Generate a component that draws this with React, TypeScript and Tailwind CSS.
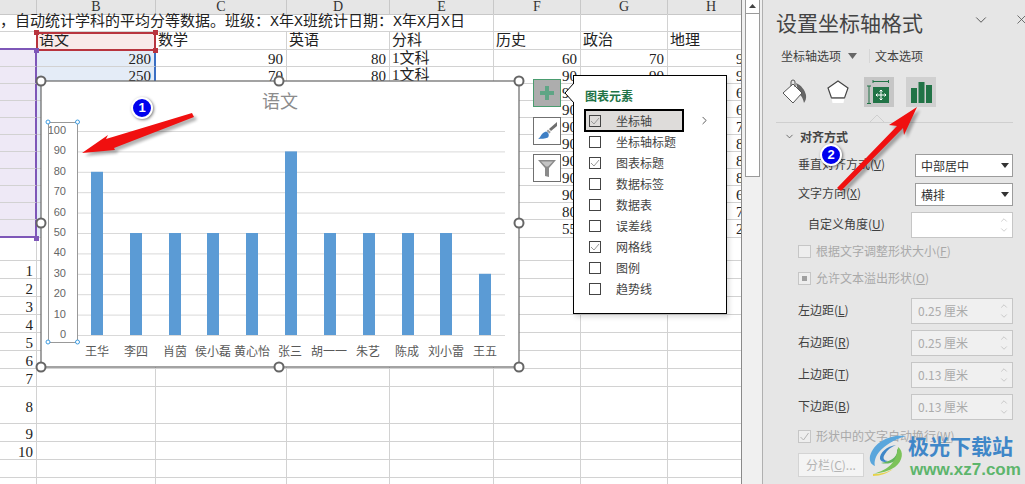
import { ChevronDown, ChevronRight, ChevronUp, X } from "lucide-react";

const rowHeights = [18, 18, 17, 17, 17, 17, 17, 17, 17, 17, 17, 17, 18, 23, 18, 18, 18, 18, 18, 18, 18, 37, 18, 18, 18, 18];
const colClass = "grid grid-cols-[37px_119px_131px_103px_104px_87px_87px_87px]";
const cell = "border-r border-b border-[#d2d2d2] pl-[2px] pr-[3px] flex items-center whitespace-nowrap overflow-hidden";

// row index -> [B, C, D, E, F, G, H]
const data: Record<number, string[]> = {
  1: ["语文", "数学", "英语", "分科", "历史", "政治", "地理"],
  2: ["280", "90", "80", "1文科", "60", "70", "90"],
  3: ["250", "70", "80", "1文科", "90", "90", "90"],
  4: ["", "", "", "", "90", "", "60"],
  5: ["", "", "", "", "90", "", "60"],
  6: ["", "", "", "", "90", "", "70"],
  7: ["", "", "", "", "90", "", "80"],
  8: ["", "", "", "", "90", "", "80"],
  9: ["", "", "", "", "90", "", "80"],
  10: ["", "", "", "", "90", "", "60"],
  11: ["", "", "", "", "80", "", "70"],
  12: ["", "", "", "", "55", "", "20"],
};

const rowNumbers: Record<number, string> = { 14: "1", 15: "2", 16: "3", 17: "4", 18: "5", 19: "6", 20: "7", 21: "8", 22: "9", 23: "10" };

const bars = [
  { name: "王华", x: 91, v: 80, c: 97 },
  { name: "李四", x: 130, v: 50, c: 136 },
  { name: "肖茵", x: 169, v: 50, c: 175 },
  { name: "侯小磊", x: 207, v: 50, c: 213 },
  { name: "黄心怡", x: 246, v: 50, c: 252 },
  { name: "张三", x: 285, v: 90, c: 290 },
  { name: "胡一一", x: 324, v: 50, c: 329 },
  { name: "朱艺", x: 363, v: 50, c: 368 },
  { name: "陈成", x: 402, v: 50, c: 407 },
  { name: "刘小雷", x: 440, v: 50, c: 446 },
  { name: "王五", x: 479, v: 30, c: 485 },
];

const menuItems = [
  { label: "坐标轴", on: true, active: true },
  { label: "坐标轴标题", on: false },
  { label: "图表标题", on: true },
  { label: "数据标签", on: false },
  { label: "数据表", on: false },
  { label: "误差线", on: false },
  { label: "网格线", on: true },
  { label: "图例", on: false },
  { label: "趋势线", on: false },
];

function Sheet() {
  return (
    <div className="w-[742px] shrink-0 overflow-hidden border-r border-[#8a8a8a] font-['Liberation_Serif','Noto_Sans_CJK_SC',serif] text-[15px] leading-[15px] text-[#222]">
      <div className={`${colClass} h-[14px] bg-[#e6e6e6] text-[14px] leading-[14px] text-[#333]`}>
        {["", "B", "C", "D", "E", "F", "G", "H"].map((c, i) => (
          <div key={i} className="text-center border-r border-[#c8c8c8] border-b">{c}</div>
        ))}
      </div>
      {rowHeights.map((h, r) => {
        if (r === 0) {
          return (
            <div key={r} className={colClass} style={{ height: h }}>
              <div className={`${cell} col-span-5 !pl-0 !overflow-visible font-['Liberation_Mono','Noto_Sans_CJK_SC',monospace]`}>，自动统计学科的平均分等数据。班级：X年X班统计日期：X年X月X日</div>
              <div className={cell}></div>
              <div className={cell}></div>
              <div className={cell}></div>
            </div>
          );
        }
        const values = data[r] || ["", "", "", "", "", "", ""];
        const inPurple = r >= 2 && r <= 12;
        return (
          <div key={r} className={colClass} style={{ height: h }}>
            <div
              className={`${cell} justify-end pt-[4px] ${inPurple ? "bg-[#eee9f6] !border-r-2 !border-r-[#7e57b8]" : ""} ${r === 1 || r === 12 ? "!border-b-2 !border-b-[#7e57b8]" : ""}`}
            >
              {rowNumbers[r]}
            </div>
            {values.map((v, i) => (
              <div
                key={i}
                className={`${cell} ${r > 1 && i !== 3 ? "justify-end pt-[2px]" : ""} ${i === 0 && r === 1 ? "bg-[#f8e9e9]" : ""} ${i === 0 && inPurple ? "bg-[#e4ecf7] !border-r-2 !border-r-[#3a6fc4]" : ""}`}
              >
                {v}
              </div>
            ))}
          </div>
        );
      })}
    </div>
  );
}

function Selection() {
  return (
    <>
      <div className="absolute left-[36px] top-[32px] w-[120px] h-[19px] border-2 border-[#b8343e]" />
      <div className="absolute left-[34px] top-[30px] w-[5px] h-[5px] bg-[#b8343e]" />
      <div className="absolute left-[153px] top-[30px] w-[5px] h-[5px] bg-[#b8343e]" />
      <div className="absolute left-[153px] top-[48px] w-[5px] h-[5px] bg-[#b8343e]" />
      <div className="absolute left-[34px] top-[48px] w-[5px] h-[5px] bg-[#7e57b8]" />
      <div className="absolute left-[34px] top-[236px] w-[5px] h-[5px] bg-[#7e57b8]" />
    </>
  );
}

function Chart() {
  const handles = [
    [41, 81], [279, 81], [519, 81], [41, 223], [519, 223], [41, 367], [279, 367], [519, 367],
  ];
  const ticks = [100, 90, 80, 70, 60, 50, 40, 30, 20, 10, 0];
  return (
    <div className="absolute left-[41px] top-[81px] w-[478px] h-[286px] bg-white">
      <svg width="478" height="286" viewBox="41 81 478 286" className="overflow-visible font-['Noto_Sans_CJK_SC',sans-serif]">
        <rect x="41" y="81" width="478" height="286" fill="white" stroke="#666" strokeWidth="1.2" />
        <text x="280" y="108" textAnchor="middle" fontSize="18" fill="#8c8c8c">语文</text>
        {ticks.map((t) => {
          const y = 335 - t * 2.04;
          return (
            <g key={t}>
              <line x1="78" x2="505" y1={y + 0.5} y2={y + 0.5} stroke="#d9d9d9" />
              <text x="66" y={y + 3} textAnchor="end" fontSize="11" fill="#666" fontFamily="Liberation Sans">{t}</text>
            </g>
          );
        })}
        {bars.map((b) => (
          <g key={b.name}>
            <rect x={b.x} y={335 - b.v * 2.04} width="12" height={b.v * 2.04} fill="#5b9bd5" />
            <text x={b.c} y="356" textAnchor="middle" fontSize="12" fill="#595959">{b.name}</text>
          </g>
        ))}
        <rect x="48.5" y="122.5" width="29" height="220" fill="none" stroke="#999" />
        {[[48, 122], [77.5, 122], [48, 342], [77.5, 342]].map(([x, y], i) => (
          <circle key={i} cx={x} cy={y} r="2" fill="white" stroke="#3d9be0" />
        ))}
        {handles.map(([x, y], i) => (
          <circle key={i} cx={x} cy={y} r="4.5" fill="white" stroke="#666" strokeWidth="2" />
        ))}
      </svg>
    </div>
  );
}

function CheckMark({ on }: { on: boolean }) {
  return (
    <span className="w-[12px] h-[12px] border border-[#444] flex items-center justify-center bg-transparent shrink-0">
      {on && (
        <svg width="10" height="10" viewBox="0 0 10 10">
          <path d="M1 5l3 3 5-6" fill="none" stroke="#999" strokeWidth="1" />
        </svg>
      )}
    </span>
  );
}

function ChartTools() {
  return (
    <div className="absolute left-[533px] top-[79px] flex flex-col gap-[10px]">
      <div className="w-[28px] h-[28px] bg-[#adadad] border border-[#4a9c6f] flex items-center justify-center">
        <svg width="16" height="16" viewBox="0 0 16 16">
          <path d="M6 1h4v5h5v4h-5v5H6v-5H1V6h5z" fill="#5fa585" />
        </svg>
      </div>
      <div className="w-[28px] h-[28px] bg-white border border-[#707070] flex items-center justify-center">
        <svg width="24" height="24" viewBox="0 0 24 24">
          <path d="M22 3l-8 7 2 2 6-5z" fill="#6e6e6e" />
          <path d="M13 10.5l2.8 2.6-1.4 1.4-2.8-2.4z" fill="#9a9a9a" />
          <path d="M11 12.5c3 1 3.5 4 2 6-3 1.5-7 1-10 1.5 3-2 3-6 8-7.500z" fill="#3f7fc4" />
        </svg>
      </div>
      <div className="w-[28px] h-[28px] mt-[-1px] bg-white border border-[#707070] flex items-center justify-center">
        <svg width="22" height="22" viewBox="0 0 22 22">
          <path d="M2 3h18l-7 8v9l-4-1v-8z" fill="#8a8a8a" />
          <path d="M5 4.500h12l-5 5h-2z" fill="#c4c4c4" />
        </svg>
      </div>
    </div>
  );
}

function ElementsMenu() {
  return (
    <div className="absolute left-[573px] top-[75px] w-[154px] h-[239px] bg-white border border-black shadow-[2px_3px_5px_rgba(0,0,0,0.15)] pt-[10px] pl-[11px] font-['Noto_Sans_CJK_SC',sans-serif] text-[12px] text-[#444]">
      <svg width="10" height="20" viewBox="0 0 10 20" className="absolute left-[-10px] top-[7px]">
        <path d="M10 0L1 10l9 10" fill="white" stroke="black" />
      </svg>
      <div className="h-[20px] leading-[20px] font-bold text-[#217346]">图表元素</div>
      <div className="mt-[4px]">
        {menuItems.map((m) => (
          <div
            key={m.label}
            className={`relative h-[21px] w-[98px] flex items-center pl-[4px] ${m.active ? "bg-[#dedcda] outline-2 outline-black -outline-offset-1" : ""}`}
          >
            <CheckMark on={m.on} />
            <span className="ml-[15px] whitespace-nowrap">{m.label}</span>
            {m.active && <ChevronRight size={13} strokeWidth={1.6} className="absolute left-[113px] top-[4px] text-[#444]" />}
          </div>
        ))}
      </div>
    </div>
  );
}

function Scrollbar() {
  return (
    <div className="w-[20px] shrink-0 bg-[#f0f0f0] pl-[3px] flex flex-col">
      <div className="w-[15px] h-[14px] bg-white border-l border-r border-[#9a9a9a] border-b flex items-center justify-center">
        <svg width="7" height="5" viewBox="0 0 7 5"><path d="M3.500 0L7 4H0z" fill="#444" /></svg>
      </div>
      <div className="w-[15px] h-[163px] bg-white border border-t-0 border-[#9a9a9a]" />
    </div>
  );
}

function FieldLabel({ text, hot }: { text: string; hot: string }) {
  return (
    <span className="whitespace-nowrap -mt-[3px]">
      {text}(<span className="underline">{hot}</span>)
    </span>
  );
}

function SelectBox({ value }: { value: string }) {
  return (
    <div className="w-[98px] h-[23px] bg-white border border-[#9c9c9c] flex items-center justify-between pl-[5px] pr-[3px] text-[#333]">
      <span>{value}</span>
      <svg width="8" height="5" viewBox="0 0 8 5"><path d="M0 0h8L4 5z" fill="#333" /></svg>
    </div>
  );
}

function Spinner({ value, disabled }: { value?: string; disabled?: boolean }) {
  return (
    <div className={`w-[102px] h-[26px] border border-[#c6c6c6] flex items-center justify-between pl-[6px] pr-[3px] ${disabled ? "bg-[#f0f0f0] text-[#ababab]" : "bg-white"}`}>
      <span>{value}</span>
      <span className="flex flex-col text-[#a0a0a0]">
        <ChevronUp size={10} strokeWidth={1.2} />
        <ChevronDown size={10} strokeWidth={1.2} />
      </span>
    </div>
  );
}

function DisabledCheck({ children, mark }: { children: React.ReactNode; mark?: "square" | "tick" }) {
  return (
    <div className="flex items-center gap-[5px] pl-[35px] text-[#a9a9a9] whitespace-nowrap">
      <span className="w-[13px] h-[13px] border border-[#c6c6c6] bg-[#eeeeee] flex items-center justify-center">
        {mark === "square" && <span className="w-[5px] h-[5px] bg-[#a0a0a0]" />}
        {mark === "tick" && (
          <svg width="11" height="11" viewBox="0 0 11 11"><path d="M1.500 6l3 3 5-7" fill="none" stroke="#b4b4b4" /></svg>
        )}
      </span>
      <span className="-mt-[2px]">{children}</span>
    </div>
  );
}

function SpinRow({ text, hot, value }: { text: string; hot: string; value: string }) {
  return (
    <div className="h-[26px] mt-[6px] flex items-center justify-between pl-[35px] pr-[12px]">
      <FieldLabel text={text} hot={hot} />
      <Spinner value={value} disabled />
    </div>
  );
}

function Panel() {
  return (
    <div className="flex-1 bg-[#e6e6e6] border-l border-[#b0b0b0] font-['Noto_Sans_CJK_SC',sans-serif] text-[12px] text-[#404040] overflow-hidden">
      <div className="h-[49px] flex items-center pb-[4px] pl-[13px] relative">
        <span className="text-[21px] leading-none text-[#444]">设置坐标轴格式</span>
        <ChevronDown size={18} strokeWidth={1.3} className="absolute left-[209px] top-[11px] text-[#555]" />
        <X size={15} strokeWidth={1.3} className="absolute left-[251px] top-[12px] text-[#555]" />
      </div>
      <div className="h-[14px] flex items-center pl-[18px]">
        <span>坐标轴选项</span>
        <svg width="9" height="6" viewBox="0 0 9 6" className="ml-[7px]"><path d="M0 0h9L4.500 6z" fill="#666" /></svg>
        <span className="w-px h-[14px] bg-[#d6d6d6] ml-[12px] mr-[5px]" />
        <span>文本选项</span>
      </div>
      <div className="mt-[14px] h-[30px] flex items-center pl-[19px]">
        <svg width="26" height="26" viewBox="0 0 26 26">
          <path d="M14 4c5 2 9 7 10 12 .5 3-.5 6-2 8-1-4-2-7-5-9z" fill="#666" />
          <path d="M1 14L11 5l9 9-9 10z" fill="white" stroke="#555" />
          <path d="M9 7V3a2 2 0 0 1 4 0v5" fill="none" stroke="#555" />
        </svg>
        <svg width="26" height="26" viewBox="0 0 26 26" className="ml-[17px]">
          <path d="M13 2l10 7-3.500 10h-13L3 9z" fill="white" stroke="#444" strokeWidth="1.200" />
          <path d="M6.500 19h13l-1 5h-11z" fill="white" />
          <path d="M6.500 19h13" stroke="#666" strokeWidth="1.500" />
        </svg>
        <div className="ml-[13px] w-[30px] h-[30px] bg-[#c6c6c6] flex items-center justify-center">
          <svg width="24" height="24" viewBox="0 0 24 24">
            <path d="M6 1.500h16M6 0v3M21.500 0v3M0 6h4M0 23.500h4M2 6v17.500" stroke="#217346" fill="none" />
            <rect x="6" y="7" width="16" height="16" fill="#217346" />
            <path d="M14 10v10M9 15h10" stroke="white" />
            <path d="M12.500 11.500L14 10l1.500 1.500M12.500 18.500L14 20l1.500-1.500M10.500 13.500L9 15l1.500 1.500M17.500 13.500L19 15l-1.500 1.500" stroke="white" fill="none" />
          </svg>
        </div>
        <div className="ml-[12px] w-[30px] h-[30px] bg-[#d0d0d0] flex items-center justify-center">
          <svg width="21" height="21" viewBox="0 0 21 21">
            <path d="M0 6h6v15H0zM7.500 0h6v21h-6zM15 3h6v18h-6z" fill="#217346" />
          </svg>
        </div>
      </div>
      <div className="mt-[15px] ml-[13px] mr-[12px] border-t border-[#cfcfcf] relative">
        <svg width="14" height="7" viewBox="0 0 14 7" className="absolute left-[94px] top-[-8px]">
          <path d="M0 7L7 0l7 7" fill="#e6e6e6" stroke="#cfcfcf" />
        </svg>
      </div>
      <div className="h-[29px] flex items-center pl-[21px] pb-[2px] gap-[5px] font-bold text-[#444]">
        <ChevronDown size={11} strokeWidth={1.6} />
        <span>对齐方式</span>
      </div>
      <div className="h-[23px] mt-[2px] flex items-center justify-between pl-[35px] pr-[12px]">
        <FieldLabel text="垂直对齐方式" hot="V" />
        <SelectBox value="中部居中" />
      </div>
      <div className="h-[23px] mt-[6px] flex items-center justify-between pl-[35px] pr-[12px]">
        <FieldLabel text="文字方向" hot="X" />
        <SelectBox value="横排" />
      </div>
      <div className="h-[26px] mt-[6px] flex items-center justify-between pl-[45px] pr-[12px]">
        <FieldLabel text="自定义角度" hot="U" />
        <Spinner />
      </div>
      <div className="h-[27px] flex items-center">
        <DisabledCheck>根据文字调整形状大小(<span className="underline">F</span>)</DisabledCheck>
      </div>
      <div className="h-[27px] flex items-center">
        <DisabledCheck mark="square">允许文本溢出形状(<span className="underline">O</span>)</DisabledCheck>
      </div>
      <SpinRow text="左边距" hot="L" value="0.25 厘米" />
      <SpinRow text="右边距" hot="R" value="0.25 厘米" />
      <SpinRow text="上边距" hot="T" value="0.13 厘米" />
      <SpinRow text="下边距" hot="B" value="0.13 厘米" />
      <div className="h-[33px] flex items-center">
        <DisabledCheck mark="tick">形状中的文字自动换行(<span className="underline">W</span>)</DisabledCheck>
      </div>
      <div className="ml-[35px] w-[66px] h-[24px] bg-[#f4f4f4] border border-[#d4d4d4] flex items-center justify-center text-[#b4b4b4]">
        分栏(<span className="underline">C</span>)...
      </div>
    </div>
  );
}

function Watermark() {
  return (
    <div className="absolute left-[868px] top-[432px] flex items-center">
      <svg width="40" height="48" viewBox="0 0 40 48">
        <path d="M38 4C22 2 6 10 2 24c-1 6 2 9 5 10C5 26 12 12 38 4z" fill="#5aa6dc" />
        <path d="M28 13c-9 1-17 8-16 14 1 3 5 4 8 2-4 0-6-3-3-7 2-4 6-7 11-9z" fill="#3f87c8" />
        <path d="M13 31c8 2 16-1 18-8 1-3 0-5-2-6 1 6-3 12-16 14z" fill="#62b45e" />
        <path d="M30 15c6 4 5 14-3 20-6 4-14 6-22 7 10-3 24-8 25-27z" fill="#7cc35a" />
        <path d="M5 42c8 0 15-2 20-5-5 4-12 7-20 7z" fill="#e6d24a" />
      </svg>
      <div className="flex flex-col font-['Noto_Sans_CJK_SC',sans-serif] font-bold leading-none">
        <span className="text-[21px] text-[#3f87c8] whitespace-nowrap">极光下载站</span>
        <span className="mt-[5px] ml-[2px] text-[17px] text-[#5db56c] font-['Liberation_Sans',sans-serif] whitespace-nowrap">www.xz7.com</span>
      </div>
    </div>
  );
}

function Arrows() {
  const one = "82,153 108,135 106,139 192,113 194,117 114,148 115,150";
  const two = "917,107 889,125 897,126 837,188 841,191 903,128 904,135";
  return (
    <>
      <svg width="1025" height="484" className="absolute left-0 top-0 blur-[1.5px] opacity-30 pointer-events-none">
        <polygon points={one} transform="translate(3 3)" fill="#000" />
        <polygon points={two} transform="translate(3 3)" fill="#000" />
      </svg>
      <svg width="1025" height="484" className="absolute left-0 top-0 pointer-events-none">
        <polygon points={one} fill="#f01010" />
        <polygon points={two} fill="#f01010" />
      </svg>
    </>
  );
}

function Badge({ n, className }: { n: string; className: string }) {
  return (
    <div className={`absolute w-[22px] h-[22px] rounded-full bg-[#0000ee] border-2 border-white shadow-[1px_1px_3px_rgba(0,0,0,0.5)] flex items-center justify-center text-white font-bold text-[13px] font-['Liberation_Sans',sans-serif] ${className}`}>
      {n}
    </div>
  );
}

export default function App() {
  return (
    <div className="relative w-[1025px] h-[484px] overflow-hidden bg-white flex">
      <Sheet />
      <Scrollbar />
      <Panel />
      <Selection />
      <Chart />
      <ChartTools />
      <ElementsMenu />
      <Watermark />
      <Arrows />
      <Badge n="1" className="left-[131px] top-[97px]" />
      <Badge n="2" className="left-[820px] top-[144px]" />
    </div>
  );
}
